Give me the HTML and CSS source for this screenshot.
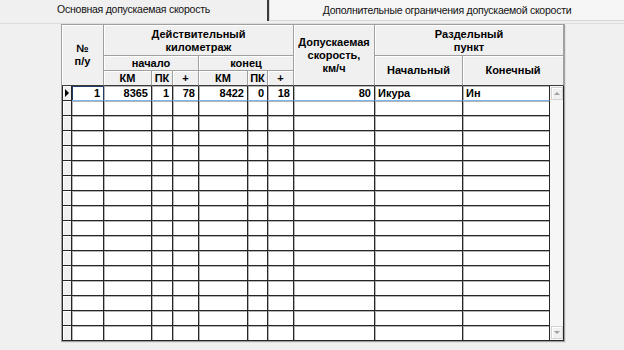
FILE: index.html
```html
<!DOCTYPE html>
<html lang="ru">
<head>
    <meta charset="UTF-8">
    <title>Допускаемая скорость</title>
    <link rel="stylesheet" href="styles.css">
</head>
<body>
    <div class="tabs">
        <div class="tab tab-active">Основная допускаемая скорость</div>
        <div class="tab tab-extra">Дополнительные ограничения допускаемой скорости</div>
    </div>

    <div class="grid-frame">
        <div class="grid">
            <!-- header -->
            <div class="hd hd-num hd-base">№<br>п/у</div>
            <div class="hd hd-km">Действительный<br>километраж</div>
            <div class="hd hd-speed hd-base">Допускаемая<br>скорость,<br>км/ч</div>
            <div class="hd hd-point">Раздельный<br>пункт</div>
            <div class="hd hd-start">начало</div>
            <div class="hd hd-finish">конец</div>
            <div class="hd hd-first hd-base">Начальный</div>
            <div class="hd hd-last hd-base">Конечный</div>
            <div class="hd hd-sub hd-base">КМ</div>
            <div class="hd hd-sub hd-base">ПК</div>
            <div class="hd hd-sub hd-base">+</div>
            <div class="hd hd-sub hd-base">КМ</div>
            <div class="hd hd-sub hd-base">ПК</div>
            <div class="hd hd-sub hd-base">+</div>

            <div class="scroll">
                <div class="sb-btn sb-up"></div>
                <div class="sb-btn sb-down"></div>
            </div>

            <!-- rows -->
            <div class="ind cur"></div><div class="cell num sel focus">1</div><div class="cell num sel">8365</div><div class="cell num sel">1</div><div class="cell num sel">78</div><div class="cell num sel">8422</div><div class="cell num sel">0</div><div class="cell num sel">18</div><div class="cell num sel">80</div><div class="cell sel">Икура</div><div class="cell sel">Ин</div>
            <div class="ind"></div><div class="cell"></div><div class="cell"></div><div class="cell"></div><div class="cell"></div><div class="cell"></div><div class="cell"></div><div class="cell"></div><div class="cell"></div><div class="cell"></div><div class="cell"></div>
            <div class="ind"></div><div class="cell"></div><div class="cell"></div><div class="cell"></div><div class="cell"></div><div class="cell"></div><div class="cell"></div><div class="cell"></div><div class="cell"></div><div class="cell"></div><div class="cell"></div>
            <div class="ind"></div><div class="cell"></div><div class="cell"></div><div class="cell"></div><div class="cell"></div><div class="cell"></div><div class="cell"></div><div class="cell"></div><div class="cell"></div><div class="cell"></div><div class="cell"></div>
            <div class="ind"></div><div class="cell"></div><div class="cell"></div><div class="cell"></div><div class="cell"></div><div class="cell"></div><div class="cell"></div><div class="cell"></div><div class="cell"></div><div class="cell"></div><div class="cell"></div>
            <div class="ind"></div><div class="cell"></div><div class="cell"></div><div class="cell"></div><div class="cell"></div><div class="cell"></div><div class="cell"></div><div class="cell"></div><div class="cell"></div><div class="cell"></div><div class="cell"></div>
            <div class="ind"></div><div class="cell"></div><div class="cell"></div><div class="cell"></div><div class="cell"></div><div class="cell"></div><div class="cell"></div><div class="cell"></div><div class="cell"></div><div class="cell"></div><div class="cell"></div>
            <div class="ind"></div><div class="cell"></div><div class="cell"></div><div class="cell"></div><div class="cell"></div><div class="cell"></div><div class="cell"></div><div class="cell"></div><div class="cell"></div><div class="cell"></div><div class="cell"></div>
            <div class="ind"></div><div class="cell"></div><div class="cell"></div><div class="cell"></div><div class="cell"></div><div class="cell"></div><div class="cell"></div><div class="cell"></div><div class="cell"></div><div class="cell"></div><div class="cell"></div>
            <div class="ind"></div><div class="cell"></div><div class="cell"></div><div class="cell"></div><div class="cell"></div><div class="cell"></div><div class="cell"></div><div class="cell"></div><div class="cell"></div><div class="cell"></div><div class="cell"></div>
            <div class="ind"></div><div class="cell"></div><div class="cell"></div><div class="cell"></div><div class="cell"></div><div class="cell"></div><div class="cell"></div><div class="cell"></div><div class="cell"></div><div class="cell"></div><div class="cell"></div>
            <div class="ind"></div><div class="cell"></div><div class="cell"></div><div class="cell"></div><div class="cell"></div><div class="cell"></div><div class="cell"></div><div class="cell"></div><div class="cell"></div><div class="cell"></div><div class="cell"></div>
            <div class="ind"></div><div class="cell"></div><div class="cell"></div><div class="cell"></div><div class="cell"></div><div class="cell"></div><div class="cell"></div><div class="cell"></div><div class="cell"></div><div class="cell"></div><div class="cell"></div>
            <div class="ind"></div><div class="cell"></div><div class="cell"></div><div class="cell"></div><div class="cell"></div><div class="cell"></div><div class="cell"></div><div class="cell"></div><div class="cell"></div><div class="cell"></div><div class="cell"></div>
            <div class="ind"></div><div class="cell"></div><div class="cell"></div><div class="cell"></div><div class="cell"></div><div class="cell"></div><div class="cell"></div><div class="cell"></div><div class="cell"></div><div class="cell"></div><div class="cell"></div>
            <div class="ind"></div><div class="cell"></div><div class="cell"></div><div class="cell"></div><div class="cell"></div><div class="cell"></div><div class="cell"></div><div class="cell"></div><div class="cell"></div><div class="cell"></div><div class="cell"></div>
            <div class="ind"></div><div class="cell"></div><div class="cell"></div><div class="cell"></div><div class="cell"></div><div class="cell"></div><div class="cell"></div><div class="cell"></div><div class="cell"></div><div class="cell"></div><div class="cell"></div>
        </div>
    </div>
</body>
</html>
```

FILE: styles.css
```css
* {
    margin: 0;
    padding: 0;
    box-sizing: border-box;
}

body {
    font-family: "Liberation Sans", Arial, sans-serif;
    font-size: 11px;
    color: #000;
    background-color: #f0f0f0;
    width: 624px;
    height: 350px;
    overflow: hidden;
}

/* tabs */

.tabs {
    display: flex;
    height: 24px;
    border-bottom: 1px solid #dcdcdc;
}

.tab {
    height: 21px;
    line-height: 18px;
    text-align: center;
    white-space: nowrap;
    font-size: 10.5px;
    letter-spacing: -0.25px;
    color: #111;
}

.tab-active {
    width: 269px;
    border-right: 2px solid #3a3a3a;
}

.tab-extra {
    flex: 1;
    background-color: #f6f6f6;
    border-left: 1px solid #d6d6d6;
    border-bottom: 1px solid #d6d6d6;
    line-height: 20px;
}

/* grid */

.grid-frame {
    margin: 0 0 0 61px;
    width: 504px;
    border: 1px solid #a0a0a0;
    box-shadow: 1px 1px 0 #e2e2e2;
}

.grid {
    display: grid;
    grid-template-columns: 10px 32px 48px 21px 26px 49px 20px 26px 81px 88px 87px 14px;
    grid-template-rows: 31px 15px 15px repeat(17, 15px);
}

.hd {
    display: flex;
    align-items: center;
    justify-content: center;
    text-align: center;
    font-weight: bold;
    line-height: 13px;
    background-color: #f0f0f0;
    border-right: 1px solid #a0a0a0;
    border-bottom: 1px solid #a0a0a0;
    box-shadow: inset 1px 1px 0 #fff;
    white-space: nowrap;
}

.hd-base {
    border-bottom-color: #3a3a3a;
}

.hd-num { grid-column: 1 / 3; grid-row: 1 / 4; padding-bottom: 1px; }
.hd-km { grid-column: 3 / 9; grid-row: 1; padding-top: 2px; }
.hd-speed { grid-column: 9; grid-row: 1 / 4; padding-top: 1px; }
.hd-point { grid-column: 10 / 13; grid-row: 1; padding-top: 2px; }
.hd-start { grid-column: 3 / 6; grid-row: 2; }
.hd-finish { grid-column: 6 / 9; grid-row: 2; }
.hd-first { grid-column: 10; grid-row: 2 / 4; }
.hd-last { grid-column: 11 / 13; grid-row: 2 / 4; }
.hd-sub { grid-row: 3; }

.cell {
    background-color: #fff;
    border-right: 1px solid #262626;
    border-bottom: 1px solid #262626;
    box-shadow: inset 1px 1px 0 #b4b4b4;
    padding: 0 3px;
    line-height: 14px;
    font-weight: bold;
    white-space: nowrap;
    overflow: hidden;
}

.num {
    text-align: right;
}

.sel {
    border-bottom-color: #7db4ec;
}

.focus {
    box-shadow: inset 1px 1px 0 #1f3d66;
    border-right-color: #1f3d66;
}

.ind {
    background-color: #f0f0f0;
    border-left: 1px solid #262626;
    border-right: 1px solid #262626;
    border-bottom: 1px solid #262626;
    box-shadow: inset 1px 1px 0 #fff;
}

.ind.cur::before {
    content: "";
    display: block;
    width: 0;
    height: 0;
    margin: 3px 0 0 2px;
    border-left: 4px solid #000;
    border-top: 4px solid transparent;
    border-bottom: 4px solid transparent;
}

/* scrollbar */

.scroll {
    grid-column: 12;
    grid-row: 4 / 21;
    display: flex;
    flex-direction: column;
    justify-content: space-between;
    background-color: #f6f6f6;
    border-right: 1px solid #262626;
    border-bottom: 1px solid #262626;
    padding: 1px 0 1px 1px;
}

.sb-btn {
    height: 13px;
    display: flex;
    align-items: center;
    justify-content: center;
    background-color: #f0f0f0;
    border: 1px solid #d4d4d4;
    box-shadow: inset 1px 1px 0 #fff;
}

.sb-btn::before {
    content: "";
    width: 0;
    height: 0;
    border-left: 3px solid transparent;
    border-right: 3px solid transparent;
}

.sb-up::before {
    border-bottom: 3px solid #a0a0a0;
}

.sb-down::before {
    border-top: 3px solid #a0a0a0;
}
```
